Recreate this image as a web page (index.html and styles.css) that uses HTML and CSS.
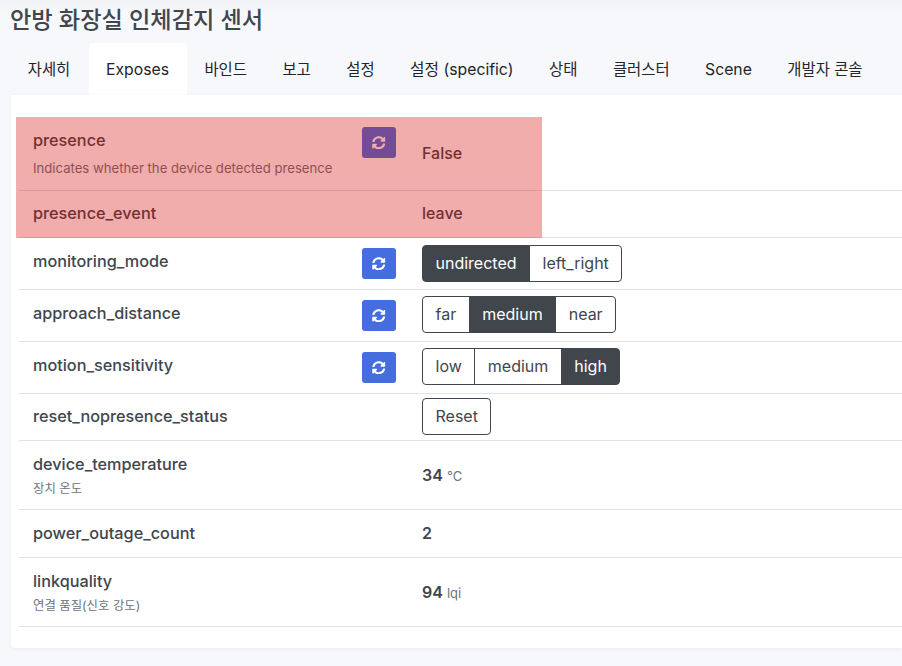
FILE: index.html
```html
<!DOCTYPE html>
<html lang="ko">
<head>
<meta charset="utf-8">
<title>안방 화장실 인체감지 센서</title>
<link rel="stylesheet" href="styles.css">
</head>
<body>
<svg class="defs" width="0" height="0" aria-hidden="true"><symbol id="sync" viewBox="0 0 512 512"><path fill="currentColor" d="M370.72 133.28C339.458 104.008 298.888 87.962 255.848 88c-77.458.068-144.328 53.178-162.791 126.85-1.344 5.363-6.122 9.15-11.651 9.15H24.103c-7.498 0-13.194-6.807-11.807-14.176C33.933 94.924 134.813 8 256 8c66.448 0 126.791 26.136 171.315 68.685L463.03 40.97C478.149 25.851 504 36.559 504 57.941V192c0 13.255-10.745 24-24 24H345.941c-21.382 0-32.09-25.851-16.971-40.971l41.75-41.749zM32 296h134.059c21.382 0 32.09 25.851 16.971 40.971l-41.75 41.75c31.262 29.273 71.835 45.319 114.876 45.28 77.418-.07 144.315-53.144 162.787-126.849 1.344-5.363 6.122-9.15 11.651-9.15h57.304c7.498 0 13.194 6.807 11.807 14.176C478.067 417.076 377.187 504 256 504c-66.448 0-126.791-26.136-171.315-68.685L48.97 471.03C33.851 486.149 8 475.441 8 454.059V320c0-13.255 10.745-24 24-24z"/></symbol></svg>
<main class="page">
  <h1 class="title">안방 화장실 인체감지 센서</h1>
  <nav class="tabs">
    <a class="tab ko">자세히</a>
    <a class="tab active">Exposes</a>
    <a class="tab ko">바인드</a>
    <a class="tab ko">보고</a>
    <a class="tab ko">설정</a>
    <a class="tab">설정 (specific)</a>
    <a class="tab ko">상태</a>
    <a class="tab ko">클러스터</a>
    <a class="tab">Scene</a>
    <a class="tab ko">개발자 콘솔</a>
  </nav>
  <section class="card">
    <div class="flash"></div>
    <div class="table">
      <div class="row first">
        <div class="name"><div class="prop">presence</div><div class="desc">Indicates whether the device detected presence</div></div>
        <button class="refresh"><svg class="icon"><use href="#sync"/></svg></button>
        <div class="value">False</div>
      </div>
      <div class="row tight">
        <div class="name"><div class="prop">presence_event</div></div>
        <div></div>
        <div class="value">leave</div>
      </div>
      <div class="row">
        <div class="name"><div class="prop">monitoring_mode</div></div>
        <button class="refresh"><svg class="icon"><use href="#sync"/></svg></button>
        <div class="group"><button class="opt on">undirected</button><button class="opt">left_right</button></div>
      </div>
      <div class="row raised">
        <div class="name"><div class="prop">approach_distance</div></div>
        <button class="refresh"><svg class="icon"><use href="#sync"/></svg></button>
        <div class="group"><button class="opt">far</button><button class="opt on">medium</button><button class="opt">near</button></div>
      </div>
      <div class="row raised">
        <div class="name"><div class="prop">motion_sensitivity</div></div>
        <button class="refresh"><svg class="icon"><use href="#sync"/></svg></button>
        <div class="group"><button class="opt">low</button><button class="opt">medium</button><button class="opt on">high</button></div>
      </div>
      <div class="row tight action">
        <div class="name"><div class="prop">reset_nopresence_status</div></div>
        <div></div>
        <div class="group"><button class="opt">Reset</button></div>
      </div>
      <div class="row">
        <div class="name"><div class="prop">device_temperature</div><div class="desc small">장치 온도</div></div>
        <div></div>
        <div class="value strong">34 <span class="unit">°C</span></div>
      </div>
      <div class="row tall">
        <div class="name"><div class="prop">power_outage_count</div></div>
        <div></div>
        <div class="value strong">2</div>
      </div>
      <div class="row">
        <div class="name"><div class="prop">linkquality</div><div class="desc small">연결 품질(신호 강도)</div></div>
        <div></div>
        <div class="value strong">94 <span class="unit">lqi</span></div>
      </div>
    </div>
  </section>
</main>
</body>
</html>
```

FILE: styles.css
```css
* { box-sizing: border-box; }
html, body { margin: 0; height: 100%; }
body {
  background: linear-gradient(#f1f2f6 0, #f6f8fc 14px);
  font-family: Inter, "Noto Sans CJK KR", sans-serif;
  font-size: 16px;
  color: #41464d;
  overflow: hidden;
}
.defs { position: absolute; }
.page { padding-left: 11px; height: 666px; }
.title {
  margin: 0 0 0 -1px;
  height: 43px;
  padding-top: 6px;
  font-size: 23.2px;
  line-height: 29px;
  font-weight: 500;
}
.tabs { display: flex; height: 52px; margin-left: -1px; white-space: nowrap; }
.tab {
  padding: 17px 17.75px 0;
  font-size: 15.75px;
  line-height: 20px;
  color: #212529;
  border-radius: 4px 4px 0 0;
}
.tab.ko { font-size: 15.4px; }
.tab.active { background: #fff; padding-left: 17px; margin-left: 1px; }
.card {
  position: relative;
  background: #fff;
  padding: 22px 0 22px 8px;
  height: 553px;
  border-radius: 0 0 0 4px;
  box-shadow: 0 1px 4px rgba(40, 50, 80, .06);
}
.flash {
  position: absolute;
  left: 5px;
  top: 22px;
  width: 526px;
  height: 120.5px;
  background: rgba(212, 6, 0, .33);
  pointer-events: none;
}
.row {
  display: grid;
  grid-template-columns: 329px 34px 1fr;
  padding-left: 14px;
  border-bottom: 1px solid #dee2e9;
}
.name { padding: 12px 0; }
.first .name { padding-bottom: 12px; }
.tight .name { padding: 11px 0 13px; }
.tall .name { padding-bottom: 13px; }
.prop { font-size: 16.25px; font-weight: 500; line-height: 22px; }
.desc { margin-top: 7px; font-size: 13.15px; line-height: 20px; color: #6c757d; }
.desc.small { margin-top: 4px; margin-bottom: -1px; font-size: 12.4px; line-height: 19px; }
.refresh {
  align-self: start;
  margin-top: 10px;
  width: 34px;
  height: 31px;
  padding: 0;
  border: 0;
  border-radius: 3px;
  background: #456de0;
  color: #fff;
  display: flex;
  align-items: center;
  justify-content: center;
}
.icon { width: 13.5px; height: 13.5px; display: block; }
.value { align-self: center; margin-left: 26px; margin-bottom: 2px; font-weight: 500; line-height: 22px; }
.value.strong { font-weight: 600; }
.row:nth-child(7) .value, .row:nth-child(9) .value { margin-bottom: 0; }
.unit { font-size: 13px; font-weight: 400; color: #6c757d; }
.group { align-self: start; justify-self: start; margin: 7px 0 7px 26px; display: flex; }
.raised .group { margin-top: 6px; margin-bottom: 8px; }
.action .group { margin-top: 4px; margin-bottom: 5px; }
.opt {
  height: 37px;
  padding: 0 12.5px;
  font: 400 16px/35px Inter, "Noto Sans CJK KR", sans-serif;
  color: #41464d;
  background: #fff;
  border: 1px solid #41464d;
  margin-left: -1px;
}
.opt:first-child { margin-left: 0; border-radius: 4px 0 0 4px; }
.opt:last-child { border-radius: 0 4px 4px 0; }
.opt:only-child { border-radius: 4px; }
.opt.on { background: #41464d; color: #fff; font-weight: 425; }
```
